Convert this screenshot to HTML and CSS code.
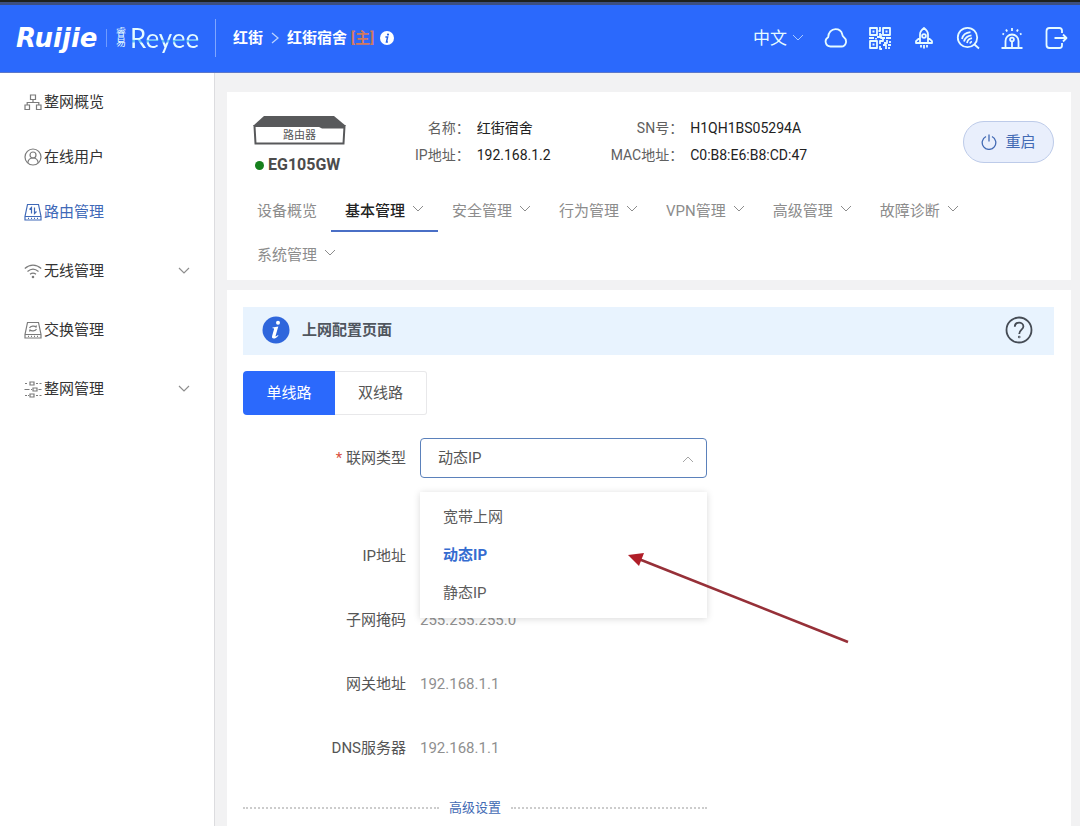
FILE: index.html
```html
<!DOCTYPE html>
<html lang="zh-CN">
<head>
<meta charset="utf-8">
<meta name="viewport" content="width=device-width, initial-scale=1">
<title>Ruijie Reyee</title>
<link rel="stylesheet" href="styles.css">
</head>
<body>
<svg width="0" height="0" class="defs" aria-hidden="true">
  <symbol id="chevron" viewBox="0 0 12 12"><path d="M1 3l5 5 5-5" fill="none" stroke="currentColor"/></symbol>
</svg>
<header class="header">
  <div class="brand">
    <span class="brand-ruijie">Ruijie</span>
    <span class="brand-line"></span>
    <span class="brand-cn">睿<br>易</span>
    <span class="brand-reyee">Reyee</span>
  </div>
  <nav class="crumbs" aria-label="位置">
    <a href="#">红街</a>
    <svg class="crumb-sep" viewBox="0 0 8 12"><path d="M1 1l6 5-6 5" fill="none" stroke="currentColor" stroke-width="1.3"/></svg>
    <a href="#">红街宿舍 <span class="master">[主]</span></a>
    <svg class="crumb-info" viewBox="0 0 14 14"><circle cx="7" cy="7" r="7" fill="#fff"/><circle cx="8" cy="3.6" r="1.1" fill="#2460ea"/><path d="M5.4 6.1h2.2L6.5 11h1.4" fill="none" stroke="#2460ea" stroke-width="1.5"/></svg>
  </nav>
  <div class="tools">
    <button class="lang">中文 <svg class="chev"><use href="#chevron"/></svg></button>
    <button class="tool" aria-label="云"><svg viewBox="0 0 24 24"><path d="M6.500 20.500a4.900 4.900 0 0 1-2.300-9.200C4.300 6.500 7.500 3.200 11.500 3.200c3.500 0 6 2 6.800 5.300 0 1.200.4 1.800 1.600 2.800 3.800 3 2.200 9.200-2.400 9.200z"/></svg></button>
    <button class="tool" aria-label="二维码"><svg viewBox="0 0 24 24"><path d="M2 2h7v7H2zM15 2h7v7h-7zM2 15h7v7H2z"/><path d="M4.500 5.500h2M17.500 5.500h2M4.500 18.500h2M12 1v4h-1.500M12 7v4H9M1 12h5M13 8v4h4M15 12v3h-3v3M18 12h5M19 14v3h-3M22 15v2M12 20v3h2M15 19h3v4M20 19h3M21 21v2M8 12v1.500"/></svg></button>
    <button class="tool" aria-label="优化"><svg viewBox="0 0 24 24"><path d="M8 17V8.500C8 5.800 10 3.500 12 2c2 1.500 4 3.800 4 6.500V17zM8 11.500l-4 3.700V17h4M16 11.500l4 3.700V17h-4M9 19v2.500M12 19v3.500M15 19v2.500"/><circle cx="12" cy="10" r="1.900"/></svg></button>
    <button class="tool" aria-label="检测"><svg viewBox="0 0 24 24"><circle cx="11.500" cy="11.500" r="9.700"/><path d="M18.500 18.500l4.500 4M6 13c.8-4 3.500-6.300 8.500-6.800M8 15.500c1-3.500 3.300-5.600 7.500-6.100M11 17c.5-2.700 2-4.300 5-4.800M14 17.500c.2-1 .8-1.700 2-2"/></svg></button>
    <button class="tool" aria-label="告警"><svg viewBox="0 0 24 24"><path d="M1.500 22h21M5.500 22v-7a6.500 6.500 0 0 1 13 0v7M12 16v6M12 2v3M6 3.500l1.200 2M18 3.500l-1.200 2M2.500 7.500l1.500 1M21.500 7.500l-1.500 1"/><circle cx="12" cy="13.500" r="1.900"/></svg></button>
    <button class="tool" aria-label="退出"><svg viewBox="0 0 24 24"><path d="M18 7V4.500C18 3 17 2 15.500 2h-10C3.500 2 2.500 3 2.500 5v14c0 2 1 3 3 3h10c1.500 0 2.500-1 2.500-2.500V17M10.500 12h12M19 8.500l3.500 3.500-3.500 3.500"/></svg></button>
  </div>
</header>
<div class="body">
  <nav class="sidebar" aria-label="主菜单">
    <ul class="menu">
      <li><a href="#"><svg viewBox="0 0 18 18"><path d="M6.500 2h5v4.500h-5zM1 12h4.500v4.500H1zM12.500 12H17v4.500h-4.500zM9 6.500v3M3.200 12V9.500h11.600V12"/></svg>整网概览</a></li>
      <li><a href="#"><svg viewBox="0 0 18 18"><circle cx="9" cy="9" r="8"/><circle cx="9" cy="7" r="3"/><path d="M3.800 15c.3-3 2.200-5 5.200-5s4.900 2 5.200 5"/></svg>在线用户</a></li>
      <li><a href="#" class="active" aria-current="page"><svg viewBox="0 0 18 18"><path d="M3.500 1.500h11l2.500 12v3.500H1v-3.500zM1 13.500h16M4 15.300h1M7 15.300h1M10 15.300h1M13 15.300h1M7.500 10.500v-6L5.500 6.500M10.500 4.500v6l2-2"/></svg>路由管理</a></li>
    </ul>
    <ul class="menu menu-tall">
      <li><a href="#"><svg viewBox="0 0 18 18"><path d="M.8 6.500c5-4.600 11.400-4.600 16.400 0M3.500 9.500c3.500-3 7.500-3 11 0M6 12.300c2-1.600 4-1.600 6 0"/><circle cx="9" cy="15" r=".7"/></svg>无线管理<svg class="chev"><use href="#chevron"/></svg></a></li>
      <li><a href="#"><svg viewBox="0 0 18 18"><path d="M3.500 1.500h11l2.500 12v3.500H1v-3.500zM1 13.500h16M4 15.300h1M7 15.300h1M10 15.300h1M13 15.300h1M5.500 7c1-2 5-2.500 6.500-1l.5-1.500M12.500 8c-1 2-5 2.500-6.500 1L5.500 10.500"/></svg>交换管理</a></li>
      <li><a href="#"><svg viewBox="0 0 18 18"><path d="M1 3.500h2M12 3.500h2M15.500 3.500h2M.5 9.500h5M7 9.500h1M14.500 9.500h3M1 15.500h2M4 15.500h1M12 15.500h2M15.500 15.500h2M6 2h4v3H6zM9 8h4v3H9zM6 14h4v3H6z"/></svg>整网管理<svg class="chev"><use href="#chevron"/></svg></a></li>
    </ul>
  </nav>
  <main class="main">
    <section class="card device-card">
      <div class="device">
        <div class="device-id">
          <svg class="router" viewBox="0 0 93 30"><path d="M11 0h70l12 10H0z" fill="#58595b"/><path d="M1.500 10h90l-1 17.500H2.500z" fill="#fff" stroke="#58595b" stroke-width="2"/><path d="M64 10h28v2.500H69z" fill="#58595b"/><text x="46.500" y="23" text-anchor="middle" class="router-text">路由器</text></svg>
          <strong class="model"><span class="dot"></span>EG105GW</strong>
        </div>
        <dl class="info">
          <dt>名称：</dt><dd>红街宿舍</dd><dt>SN号：</dt><dd>H1QH1BS05294A</dd>
          <dt>IP地址：</dt><dd>192.168.1.2</dd><dt>MAC地址：</dt><dd>C0:B8:E6:B8:CD:47</dd>
        </dl>
        <button class="reboot"><svg viewBox="0 0 16 16"><path d="M5 2.500a6.800 6.800 0 1 0 6 0M8 .5v7" fill="none" stroke="currentColor" stroke-width="1.300"/></svg>重启</button>
      </div>
      <nav class="tabs" aria-label="设备菜单">
        <a href="#">设备概览</a>
        <a href="#" class="current" aria-current="page">基本管理<svg class="chev"><use href="#chevron"/></svg></a>
        <a href="#">安全管理<svg class="chev"><use href="#chevron"/></svg></a>
        <a href="#">行为管理<svg class="chev"><use href="#chevron"/></svg></a>
        <a href="#">VPN管理<svg class="chev"><use href="#chevron"/></svg></a>
        <a href="#">高级管理<svg class="chev"><use href="#chevron"/></svg></a>
        <a href="#">故障诊断<svg class="chev"><use href="#chevron"/></svg></a>
        <a href="#">系统管理<svg class="chev"><use href="#chevron"/></svg></a>
      </nav>
    </section>
    <section class="card config-card">
      <div class="notice">
        <svg class="notice-icon" viewBox="0 0 28 28"><circle cx="14" cy="14" r="13.500" fill="#2f66dc"/><circle cx="16" cy="6.800" r="2" fill="#fff"/><path d="M10.500 11.500l5.800-1-2.700 9.300c-.2 1 .5.9 2.300-.8l.6.6c-2 2.500-3.500 3-4.800 3-1.500 0-2-1-1.600-2.500l2-7c.2-.8-.4-.9-1.600-.9z" fill="#fff"/></svg>
        <h1>上网配置页面</h1>
        <button class="help" aria-label="帮助"><svg viewBox="0 0 28 28"><circle cx="14" cy="14" r="12.500"/><path d="M9.800 10.800c0-5.600 8.600-5.300 8.600-.3 0 3-4.200 3.500-4.200 7.500"/><circle cx="14.200" cy="21" r=".4"/></svg></button>
      </div>
      <div class="lines">
        <button class="on" aria-pressed="true">单线路</button><button aria-pressed="false">双线路</button>
      </div>
      <form class="form">
        <div class="row row-type">
          <label for="type"><span class="req">*</span> 联网类型</label>
          <div class="field">
            <select id="type"><option>宽带上网</option><option selected>动态IP</option><option>静态IP</option></select>
            <svg class="chev select-chev"><use href="#chevron"/></svg>
            <ul class="options" role="listbox" aria-label="联网类型">
              <li role="option" aria-selected="false">宽带上网</li>
              <li role="option" aria-selected="true" class="selected">动态IP</li>
              <li role="option" aria-selected="false">静态IP</li>
            </ul>
            <svg class="arrow" viewBox="0 0 222 92"><path d="M12 7.500L220 90" stroke="#963038" stroke-width="2.500"/><path d="M0 3l16-2-5 13z" fill="#b01e28"/></svg>
          </div>
        </div>
        <div class="row"><label for="ip">IP地址</label><output id="ip"></output></div>
        <div class="row"><label for="mask">子网掩码</label><output id="mask">255.255.255.0</output></div>
        <div class="row"><label for="gw">网关地址</label><output id="gw">192.168.1.1</output></div>
        <div class="row"><label for="dns">DNS服务器</label><output id="dns">192.168.1.1</output></div>
        <div class="advanced"><a href="#">高级设置</a></div>
      </form>
    </section>
  </main>
</div>
</body>
</html>
```
FILE: styles.css
```css
* { box-sizing: border-box; }
body {
  margin: 0;
  min-height: 100vh;
  display: flex;
  flex-direction: column;
  background: #f2f2f3;
  color: #333;
  font: 15px/24px Roboto, "Noto Sans CJK SC", sans-serif;
}
a { color: inherit; text-decoration: none; }
ul, dl, dd, h1 { margin: 0; padding: 0; list-style: none; }
button, select { font: inherit; color: inherit; cursor: pointer; }
button { padding: 0; border: 0; background: none; }
svg { display: block; flex: none; }
.defs { position: absolute; }
.chev { width: 12px; height: 12px; }

.header {
  display: flex;
  align-items: center;
  height: 73px;
  padding: 2px 12px 0 16px;
  background: #2b69fc;
  border-top: 2px solid #1d211e;
  border-bottom: 1px solid #5d78c8;
  box-shadow: inset 0 3px 0 #3c4f80;
  color: #e6fbff;
}
.brand { display: flex; align-items: center; width: 200px; height: 38px; border-right: 1px solid #7fa6ff; }
.brand-ruijie { width: 82px; color: #fff; font: italic 700 26px/36px "DejaVu Sans", sans-serif; }
.brand-line { flex: none; width: 1px; height: 18px; margin: 0 8px; background: #6f9bff; }
.brand-cn { width: 12px; font-size: 10px; line-height: 10px; text-align: center; }
.brand-reyee {
  margin-left: 3px;
  font: 26px/36px Lato, sans-serif;
  background: linear-gradient(#e6fbff 54%, #62c3f5 55%, #62c3f5 62%, #e6fbff 63%);
  background-clip: text;
  color: transparent;
}
.crumbs { display: flex; align-items: center; margin-left: 17px; font-weight: 700; color: #fff; }
.crumb-sep { width: 8px; height: 12px; margin: 0 8px; color: #b9d2ff; }
.master { color: #d0795f; }
.crumb-info { width: 14px; height: 14px; margin-left: 6px; }
.tools { display: flex; align-items: center; gap: 20px; margin-left: auto; }
.lang { display: flex; align-items: center; gap: 5px; font-size: 17px; }
.lang .chev { color: #a9cbff; }
.tool svg { width: 24px; height: 24px; fill: none; stroke: currentColor; stroke-width: 1.8; stroke-linejoin: round; }

.body { flex: 1; display: flex; }
.sidebar { flex: none; width: 215px; padding-top: 1px; background: #fff; border-right: 1px solid #dcdcdf; }
.menu a { display: flex; align-items: center; gap: 2px; height: 55px; padding: 0 24px; }
.menu svg { width: 18px; height: 18px; fill: none; stroke: #7b7b7b; stroke-width: 1.2; }
.menu .active { color: #3f69b8; }
.menu .active svg { stroke: #3f69b8; }
.menu-tall { margin-top: 2px; }
.menu-tall a { height: 59px; }
.menu .chev { width: 12px; height: 12px; margin-left: auto; stroke: none; color: #8e8e8e; }

.main { flex: 1; min-width: 0; display: flex; flex-direction: column; gap: 10px; padding: 19px 9px 0 12px; }
.card { background: #fff; padding: 16px; }
.device-card { padding: 23px 17px 4px 16px; }
.device { display: flex; align-items: flex-start; padding-left: 10px; margin-bottom: 11px; }
.device-id { width: 162px; padding-top: 1px; }
.router { width: 93px; height: 30px; }
.router-text { font-size: 11px; fill: #555; }
.model { display: flex; align-items: center; gap: 4px; height: 24px; margin: 7px 0 0 2px; color: #4c4c4c; font-size: 16px; }
.dot { width: 9px; height: 9px; border-radius: 50%; background: #16801d; }
.info { display: grid; grid-template-columns: auto 127px auto auto; column-gap: 7px; font-size: 14px; line-height: 27px; }
.info dt { color: #606060; text-align: right; }
.info dd { color: #222; }
.reboot {
  display: flex;
  align-items: center;
  justify-content: center;
  gap: 8px;
  width: 91px;
  height: 42px;
  margin: 6px 0 0 auto;
  border: 1px solid #bdcbe9;
  border-radius: 21px;
  background: #e9effc;
  color: #426ab4;
}
.reboot svg { width: 16px; height: 16px; }
.tabs { display: flex; flex-wrap: wrap; color: #8c8c8c; }
.tabs a { display: flex; align-items: center; gap: 7px; height: 44px; padding: 2px 14px 0; }
.tabs .chev { margin-bottom: 4px; }
.tabs .current { color: #222; font-weight: 500; box-shadow: inset 0 -2px #4a6fc6; }
.tabs .current .chev { color: #8c8c8c; }

.config-card { flex: 1; padding: 17px 17px 8px 16px; }
.notice { display: flex; align-items: center; gap: 12px; height: 48px; padding: 0 21px 2px 19px; background: #e8f3fe; }
.notice-icon { width: 28px; height: 28px; }
.notice h1 { font-size: 15px; font-weight: 700; color: #50565f; }
.help { margin-left: auto; }
.help svg { width: 28px; height: 28px; fill: none; stroke: #454b54; stroke-width: 1.8; }
.lines { display: flex; margin: 16px 0 23px; }
.lines button { width: 92px; height: 44px; border: 1px solid #e8e8ea; border-left: 0; border-radius: 0 3px 3px 0; color: #555; }
.lines .on { border: 0; border-radius: 4px 0 0 4px; background: #2b69fc; color: #fff; }
.form { max-width: 464px; }
.row { display: flex; align-items: center; gap: 14px; height: 40px; margin-bottom: 24px; }
.row label { flex: none; width: 163px; text-align: right; color: #555; }
.row output { color: #8f8f8f; }
.row-type { margin-bottom: 58px; }
.req { color: #d9503f; }
.field { position: relative; flex: 1; }
.field select {
  display: block;
  width: 100%;
  height: 40px;
  padding: 0 17px;
  appearance: none;
  border: 1px solid #5b81bb;
  border-radius: 4px;
  background: #fff;
  color: #555;
}
.select-chev { position: absolute; right: 13px; top: 15px; color: #a5a5a5; transform: rotate(180deg); }
.options {
  position: absolute;
  z-index: 1;
  top: 54px;
  left: 0;
  right: 0;
  padding: 6px 0;
  background: #fff;
  box-shadow: 0 1px 7px rgba(0, 0, 0, .15);
  color: #5c5c5c;
}
.options li { padding: 7px 23px; }
.options .selected { color: #356cd0; font-weight: 700; }
.arrow { position: absolute; z-index: 2; top: 114px; left: 208px; width: 222px; height: 92px; }
.advanced { display: flex; align-items: center; gap: 10px; margin-top: 28px; font-size: 13px; color: #426ab4; }
.advanced::before, .advanced::after { content: ""; flex: 1; border-top: 2px dotted #ccc; }
```
